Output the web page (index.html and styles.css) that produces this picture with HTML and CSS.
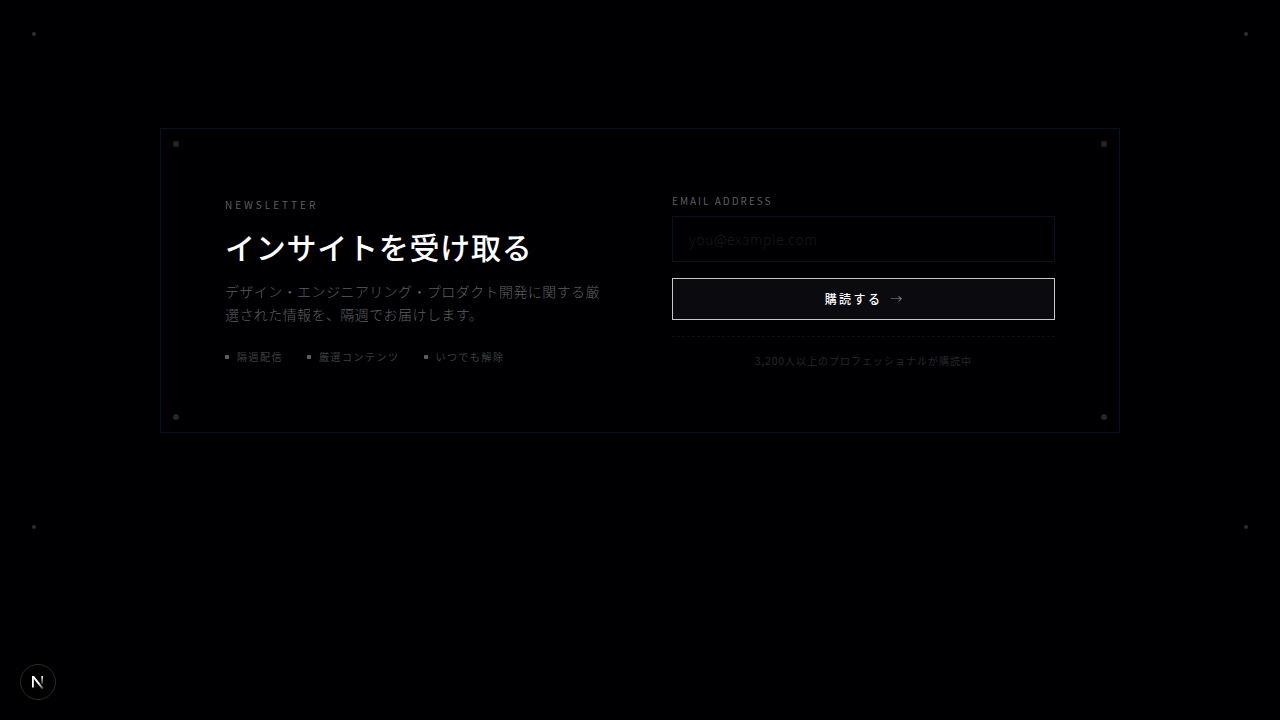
FILE: index.html
```html
<!DOCTYPE html>
<html lang="ja">
<head>
  <meta charset="UTF-8" />
  <meta name="viewport" content="width=device-width, initial-scale=1.0"/>
  <title>Newsletter</title>
  <link rel="stylesheet" href="styles.css">
</head>
<body>
  <section class="newsletter">
    <span class="dot top left"></span>
    <span class="dot top right"></span>
    <span class="dot bottom left"></span>
    <span class="dot bottom right"></span>

    <div class="card">
      <span class="corner top left"></span>
      <span class="corner top right"></span>
      <span class="corner bottom left"></span>
      <span class="corner bottom right"></span>

      <div class="intro">
        <p class="eyebrow">NEWSLETTER</p>
        <h2>インサイトを受け取る</h2>
        <p class="lead">デザイン・エンジニアリング・プロダクト開発に関する厳選された情報を、隔週でお届けします。</p>
        <ul class="features">
          <li>隔週配信</li>
          <li>厳選コンテンツ</li>
          <li>いつでも解除</li>
        </ul>
      </div>

      <form class="signup">
        <label for="email">EMAIL ADDRESS</label>
        <input type="email" id="email" placeholder="you@example.com" />
        <button type="submit" class="submit-btn">
          <span>購読する</span>
          <span class="arrow">→</span>
        </button>
        <p class="note">3,200人以上のプロフェッショナルが購読中</p>
      </form>
    </div>
  </section>

  <button class="dev-btn" aria-label="Open developer tools">
    <svg width="14" height="16" viewBox="0 0 14 16" fill="none">
      <defs>
        <linearGradient id="diagonal" x1="8" y1="9" x2="13" y2="15" gradientUnits="userSpaceOnUse">
          <stop stop-color="#fff"/>
          <stop offset="1" stop-color="#fff" stop-opacity="0.2"/>
        </linearGradient>
        <linearGradient id="stem" x1="11" y1="2" x2="11" y2="12" gradientUnits="userSpaceOnUse">
          <stop stop-color="#fff"/>
          <stop offset="1" stop-color="#fff" stop-opacity="0"/>
        </linearGradient>
      </defs>
      <path d="M1 2H3L12.5 14L11 15.2L2.5 4.5Z" fill="url(#diagonal)"/>
      <path d="M1 2H2.8V13.5H1Z" fill="#fff"/>
      <path d="M10.3 2H12V10.5H10.3Z" fill="url(#stem)"/>
    </svg>
  </button>
</body>
</html>
```
FILE: styles.css
```css
* {
  box-sizing: border-box;
}
body {
  margin: 0;
  background: #000002;
  color: #fff;
  font-family: "Noto Sans CJK JP", sans-serif;
  font-size: 14px;
}
h2, p, ul {
  margin: 0;
  padding: 0;
}
.newsletter {
  position: relative;
  padding: 128px 32px;
}
.dot,
.corner {
  position: absolute;
  border-radius: 50%;
}
.dot {
  width: 4px;
  height: 4px;
  background: #2c2d30;
}
.dot.top { top: 32px; }
.dot.bottom { bottom: 32px; }
.dot.left { left: 32px; }
.dot.right { right: 32px; }
.card {
  position: relative;
  max-width: 960px;
  margin: 0 auto;
  padding: 64px;
  border: 1px solid #06121e;
  display: grid;
  grid-template-columns: 1fr 1fr;
  gap: 64px;
  align-items: center;
}
.corner {
  width: 6px;
  height: 6px;
  background: #242527;
}
.corner.top { top: 12px; }
.corner.bottom { bottom: 12px; }
.corner.left { left: 12px; }
.corner.right { right: 12px; }
.eyebrow {
  color: #5c5f62;
  font-size: 10px;
  line-height: 15px;
  letter-spacing: 0.3em;
  margin-bottom: 16px;
}
h2 {
  font-size: 30px;
  font-weight: 500;
  line-height: 36px;
  letter-spacing: 0.025em;
  margin-bottom: 16px;
}
.lead {
  color: #5c5f62;
  font-weight: 300;
  line-height: 23px;
  letter-spacing: 0.03em;
  margin-bottom: 23px;
}
.features {
  display: flex;
  gap: 24px;
  list-style: none;
}
.features li {
  display: flex;
  align-items: center;
  gap: 8px;
  color: #3c4044;
  font-size: 10px;
  line-height: 15px;
  letter-spacing: 0.15em;
}
.features li::before {
  content: "";
  width: 4px;
  height: 4px;
  border-radius: 1px;
  background: #5c5e60;
}
.signup {
  display: flex;
  flex-direction: column;
}
.signup label {
  color: #5c5f62;
  font-size: 10px;
  line-height: 15px;
  letter-spacing: 0.2em;
  margin-bottom: 8px;
}
.signup input {
  height: 46px;
  padding: 0 16px;
  border: 1px solid #06121e;
  border-radius: 0;
  background: transparent;
  color: #fff;
  font-family: inherit;
  font-size: 14px;
  font-weight: 100;
  letter-spacing: 0.05em;
  margin-bottom: 16px;
}
.signup input::placeholder {
  color: #22242a;
}
.submit-btn {
  display: flex;
  align-items: center;
  justify-content: center;
  gap: 8px;
  height: 42px;
  border: 1px solid #c8c8c8;
  background: #0a0a0f;
  color: #fff;
  font-family: inherit;
  font-size: 12px;
  font-weight: 500;
  line-height: 16px;
  letter-spacing: 0.2em;
  cursor: pointer;
  margin-bottom: 16px;
}
.arrow {
  color: #8a8d90;
  font-weight: 300;
  letter-spacing: 0;
}
.note {
  padding-top: 16px;
  border-top: 1px dashed #0c0d10;
  color: #25282c;
  font-size: 10px;
  line-height: 15px;
  letter-spacing: 0.1em;
  text-align: center;
}
.dev-btn {
  position: fixed;
  left: 20px;
  bottom: 20px;
  width: 36px;
  height: 36px;
  padding: 0;
  display: flex;
  align-items: center;
  justify-content: center;
  border: 1px solid #2a2a2a;
  border-radius: 50%;
  background: #000;
  cursor: pointer;
}
```
